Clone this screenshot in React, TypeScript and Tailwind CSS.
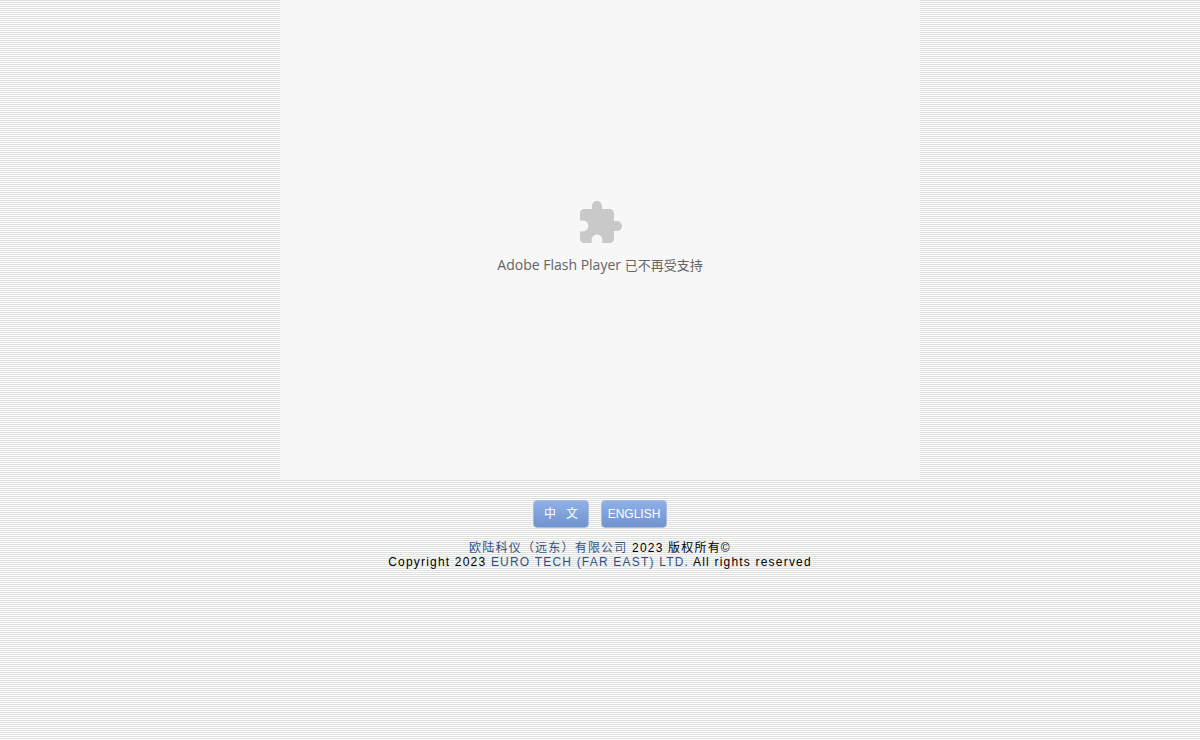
const languages = [
  { label: "中\u00a0\u00a0\u00a0文", href: "#cn", className: "w-14" },
  { label: "ENGLISH", href: "#en", className: "w-[66px]" },
]

function PuzzleIcon() {
  return (
    <svg viewBox="0 0 24 24" className="w-12 h-12 fill-[#c9c9c9]" aria-hidden="true">
      <path d="M20.5 11H19V7c0-1.1-.9-2-2-2h-4V3.5C13 2.12 11.88 1 10.5 1S8 2.12 8 3.5V5H4c-1.1 0-1.99.9-1.99 2v3.8H3.5c1.49 0 2.7 1.21 2.7 2.7s-1.21 2.7-2.7 2.7H2V20c0 1.1.9 2 2 2h3.8v-1.5c0-1.49 1.21-2.7 2.7-2.7 1.49 0 2.7 1.21 2.7 2.7V22H17c1.1 0 2-.9 2-2v-4h1.5c1.38 0 2.5-1.12 2.5-2.5S21.88 11 20.5 11z" />
    </svg>
  )
}

export default function App() {
  return (
    <div className="min-h-screen bg-[repeating-linear-gradient(to_bottom,#dfe1df_0px,#dfe1df_1px,#fdfdfd_1px,#fdfdfd_2px)] font-['Liberation_Sans','Noto_Sans_CJK_SC',sans-serif] text-xs text-black">
      {/* Plugin placeholder */}
      <main className="mx-auto flex aspect-4/3 w-full max-w-[640px] flex-col items-center bg-[#f7f7f7] pt-[199px]">
        <PuzzleIcon />
        <p className="mt-2 font-['Open_Sans','Noto_Sans_CJK_SC',sans-serif] text-sm leading-5 text-[#646464]">
          Adobe Flash Player <span className="text-[13px]">已不再受支持</span>
        </p>
      </main>

      {/* Language links */}
      <nav className="flex justify-center gap-3 pt-5">
        {languages.map((lang) => (
          <a
            key={lang.href}
            href={lang.href}
            className={`flex h-7 items-center justify-center rounded border border-[#a9bbdf] bg-linear-to-b from-[#8fafe6] to-[#7093cf] text-white ${lang.className}`}
          >
            {lang.label}
          </a>
        ))}
      </nav>

      <footer className="pt-[13px] text-center leading-[14px] tracking-widest">
        <p>
          <a href="#cn" className="text-[#35527f]">欧陆科仪（远东）有限公司</a> 2023 版权所有©
        </p>
        <p>
          Copyright 2023 <a href="#en" className="text-[#35527f]">EURO TECH (FAR EAST) LTD.</a> All rights reserved
        </p>
      </footer>
    </div>
  )
}
